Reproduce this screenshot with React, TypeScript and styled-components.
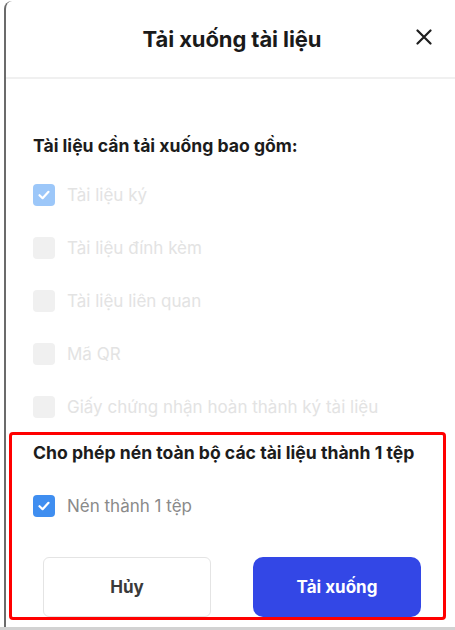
import React, {useState} from 'react';
import styled, {createGlobalStyle} from "styled-components";

const GlobalStyle = createGlobalStyle`
html, body {
margin: 0;
padding: 0;
background: #ffffff;
overflow: hidden;
}
body {
font-family: Inter, "Noto Sans", sans-serif;
}
`;

type Option = {
    label: string;
    checked: boolean;
}

const DOCUMENT_OPTIONS: Option[] = [
    {label: 'Tài liệu ký', checked: true},
    {label: 'Tài liệu đính kèm', checked: false},
    {label: 'Tài liệu liên quan', checked: false},
    {label: 'Mã QR', checked: false},
    {label: 'Giấy chứng nhận hoàn thành ký tài liệu', checked: false},
];

export default function App() {

    const [zipped, setZipped] = useState(true);

    return (
        <>
            <GlobalStyle/>
            <Screen>
                <Dialog>
                    <Header>
                        <Title>Tải xuống tài liệu</Title>
                        <CloseButton aria-label="Đóng">
                            <svg width="16" height="16" viewBox="0 0 16 16">
                                <path d="M1.5 1.5 L14.5 14.5 M14.5 1.5 L1.5 14.5" stroke="#1f1f1f" strokeWidth="2.2" strokeLinecap="round"/>
                            </svg>
                        </CloseButton>
                    </Header>
                    <Body>
                        <SectionTitle>Tài liệu cần tải xuống bao gồm:</SectionTitle>
                        <OptionList>
                            {DOCUMENT_OPTIONS.map(option => (
                                <CheckRow key={option.label} disabled>
                                    <Box checked={option.checked} disabled>
                                        {option.checked && <CheckMark/>}
                                    </Box>
                                    <Label disabled>{option.label}</Label>
                                </CheckRow>
                            ))}
                        </OptionList>
                    </Body>
                    <Highlight>
                        <SectionTitle>Cho phép nén toàn bộ các tài liệu thành 1 tệp</SectionTitle>
                        <CheckRow onClick={() => setZipped(it => !it)}>
                            <Box checked={zipped}>
                                {zipped && <CheckMark/>}
                            </Box>
                            <Label>Nén thành 1 tệp</Label>
                        </CheckRow>
                        <Actions>
                            <CancelButton>Hủy</CancelButton>
                            <PrimaryButton>Tải xuống</PrimaryButton>
                        </Actions>
                    </Highlight>
                </Dialog>
            </Screen>
        </>
    );
}

const CheckMark = () => (
    <svg width="14" height="14" viewBox="0 0 14 14">
        <path d="M2.5 7.2 L5.6 10.2 L11.5 3.8" fill="none" stroke="#ffffff" strokeWidth="2.2" strokeLinecap="round" strokeLinejoin="round"/>
    </svg>
);

const Screen = styled.div`
width: 455px;
height: 630px;
box-sizing: border-box;
border-bottom: 3px solid #d2d2d2;
overflow: hidden;
`;

const Dialog = styled.div`
margin-left: 4px;
margin-top: 1px;
width: 454px;
height: 626px;
box-sizing: border-box;
border-left: 2px solid #6b6b6b;
border-top-left-radius: 8px;
background: #ffffff;
display: flex;
flex-direction: column;
`;

const Header = styled.header`
height: 76px;
flex-shrink: 0;
border-bottom: 2px solid #f0f0f0;
display: flex;
align-items: center;
justify-content: center;
position: relative;
`;

const Title = styled.h1`
margin: 0;
font-size: 22px;
font-weight: 700;
color: #1a1a1a;
letter-spacing: -0.1px;
`;

const CloseButton = styled.button`
position: absolute;
right: 24px;
top: 26px;
width: 20px;
height: 20px;
padding: 0;
border: none;
background: none;
display: flex;
align-items: center;
justify-content: center;
cursor: pointer;
`;

const Body = styled.section`
padding: 55px 0 14px 27px;
display: flex;
flex-direction: column;
gap: 26px;
`;

const SectionTitle = styled.h2`
margin: 0;
font-size: 17.6px;
line-height: 24px;
font-weight: 700;
color: #1c1c1c;
white-space: nowrap;
`;

const OptionList = styled.div`
display: flex;
flex-direction: column;
gap: 31px;
`;

type DisabledProps = {
    disabled?: boolean;
}

const CheckRow = styled.label<DisabledProps>`
display: flex;
align-items: center;
gap: 12px;
height: 22px;
cursor: ${props => props.disabled ? 'default' : 'pointer'};
`;

type BoxProps = {
    checked: boolean;
    disabled?: boolean;
}

const Box = styled.span<BoxProps>`
width: 22px;
height: 22px;
border-radius: 4px;
flex-shrink: 0;
display: flex;
align-items: center;
justify-content: center;
background: ${props => props.checked
    ? (props.disabled ? '#9cc7f9' : '#3f8ef0')
    : '#f0f0f0'};
`;

const Label = styled.span<DisabledProps>`
font-size: 17px;
color: ${props => props.disabled ? '#e3e3e3' : '#8a8a8a'};
`;

const Highlight = styled.section`
margin-left: 3px;
width: 437px;
height: 188px;
box-sizing: border-box;
border: 3px solid #ff0000;
border-radius: 4px;
padding: 6px 22px 0 21px;
display: flex;
flex-direction: column;
gap: 30px;
`;

const Actions = styled.div`
margin-top: 10px;
padding-left: 10px;
display: flex;
justify-content: space-between;
`;

const BaseButton = styled.button`
width: 168px;
height: 60px;
font-family: Inter, "Noto Sans", sans-serif;
font-size: 17px;
font-weight: 700;
cursor: pointer;
`;

const CancelButton = styled(BaseButton)`
background: #ffffff;
border: 1.5px solid #e4e4e4;
border-radius: 6px;
color: #3a3a3a;
`;

const PrimaryButton = styled(BaseButton)`
background: #3347e6;
border: none;
border-radius: 10px;
color: #ffffff;
`;
